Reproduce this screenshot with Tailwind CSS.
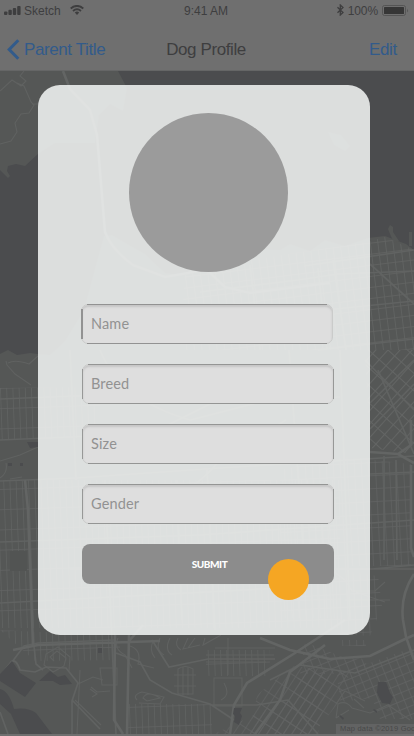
<!DOCTYPE html>
<html lang="en">
<head>
<meta charset="utf-8">
<meta name="viewport" content="width=device-width, initial-scale=1">
<title>Dog Profile</title>
<script src="https://cdn.jsdelivr.net/npm/@tailwindcss/browser@4"></script>
</head>
<body class="w-[414px] h-[736px] overflow-hidden bg-[#6f6f6f] font-['Liberation_Sans',sans-serif]">
<div class="relative flex flex-col w-[414px] h-[736px] overflow-hidden">
  <!-- Map backdrop -->
  <svg class="absolute inset-0" width="414" height="734" viewBox="0 0 414 734" fill="none">
    <defs>
      <pattern id="west" width="6.2" height="20.2" patternUnits="userSpaceOnUse" patternTransform="translate(0 388) rotate(-2)"><path d="M0 0H6.2M0 0V20.2" stroke="#626463" stroke-width="1.3"/></pattern>
      <pattern id="blocks" width="7.5" height="11" patternUnits="userSpaceOnUse" patternTransform="rotate(-7)"><path d="M0 0H8M0 0V11" stroke="#636564" stroke-width="1.5"/></pattern>
      <pattern id="diag" width="9" height="13" patternUnits="userSpaceOnUse" patternTransform="rotate(42)"><path d="M0 0H9M0 0V13" stroke="#636564" stroke-width="2"/></pattern>
      <pattern id="east" width="7" height="13" patternUnits="userSpaceOnUse" patternTransform="rotate(-3)"><path d="M0 0H7M0 0V13" stroke="#626463" stroke-width="1.3"/></pattern>
      <pattern id="south" width="7" height="14" patternUnits="userSpaceOnUse" patternTransform="rotate(33)"><path d="M0 0H7M0 0V14" stroke="#626463" stroke-width="1.4"/></pattern>
      <pattern id="se" width="8" height="8" patternUnits="userSpaceOnUse" patternTransform="rotate(-22)"><path d="M0 0H8M0 0V8" stroke="#626463" stroke-width="1.4"/></pattern>
    </defs>
    <rect width="414" height="734" fill="#555756"/>
    <path d="M118 71H414V250L406 244L398 241L385 236L368 238L345 246L325 240L310 251L290 244L280 250L250 249L215 260L180 275L165 273L145 254L129 245L112 235L104 236L96 265L84 310L65 341L50 355L38 354L30 353L17 355L8 350L0 354V170L8 178L10 176L7 171L8 166L16 164L25 166L38 154L55 143H95L99 115L110 104L123 111L127 88Z" fill="#4b4c4e"/>
    <path d="M328 132l13 3 9 11-5 5-11-6zM390 225l3 2 0 5 6 9-5 2-4-9-2-5zM409 232h3v14h-3z" fill="#555756"/>
    <!-- Street grids -->
    <path d="M0 388L100 387V437L0 440ZM0 480H340V628H0Z" fill="url(#west)"/>
    <path d="M185 275L250 260L368 242L385 237L414 250V350H180Z" fill="url(#blocks)"/>
    <path d="M365 350H414V454L370 448Z" fill="url(#diag)"/>
    <path d="M345 457L411 464V566H348V618H280V470Z" fill="url(#east)"/>
    <path d="M0 630L38 632H120V660L35 661Z" fill="url(#west)"/>
    <path d="M128 704H212V734H126ZM206 650H270V676H206Z" fill="url(#west)"/>
    <path d="M214 734L290 698L300 672L330 672L318 734Z" fill="url(#south)"/>
    <path d="M257 695L292 666L350 672L340 701L313 734H250Z" fill="url(#south)"/>
    <path d="M337 675L414 647V719H380L372 698L340 702Z" fill="url(#se)"/>
    <path d="M305 642L330 652L345 658L368 659L362 674H300Z" fill="url(#se)"/>
    <path d="M348 572l30 4 4 30-12 30-32-2zM342 640h24v6h-24z" fill="url(#east)"/>
    <!-- Minor roads -->
    <g stroke="#606261" stroke-width="1.1">
      <path d="M0 91L12 80L21 86L26 81L20 76L24 71M17 83L24 86L31 102L34 105L29 113L21 114L15 123L17 132L11 141L0 144M38 104H32"/>
      <path d="M8 363Q15 359 29 364L38 356M7 365L15 374L31 385M7 365L6 361M0 461L20 455L38 447M0 478Q8 473 6 463M10 479L22 477"/>
      <path d="M54 661L50 657L57 651L66 658L64 666L53 672L44 665L46 654L58 647L70 657L69 671"/>
      <path d="M100 668h17v17h-15zM78 684l15-7 10 3M91 687l6 5 13-1M80 670l-3 64M90 689l7 5-5 3M75 700l26 25"/>
      <path d="M137 700Q132 695 142 692L164 697L160 704L139 703M143 698Q147 690 160 698L147 701ZM130 646Q142 650 138 664L154 668M118 638Q113 649 125 655L132 668"/>
      <path d="M154 640Q148 649 155 658M160 638Q155 650 164 655M170 638Q164 650 172 655M178 638Q174 646 181 650M188 638L183 649L200 645M195 638L188 648M205 638L203 645L221 635"/>
      <path d="M178 669Q185 664 193 669V694H178ZM183 667V695M188 667V695M174 675H196M174 686H196"/>
      <path d="M214 678h28v28h-28zM221 700q10-5 3-17M228 638v37M206 655h68M206 662h60M215 648h60"/>
      <path d="M336 718L338 704Q346 700 352 708L370 713L388 705L410 720M349 710l-13 8M336 704l9-13 20 10M354 699l10 9"/>
      <path d="M330 569L345 580L352 591H375L385 582M345 600H390M356 592L370 597L385 602M322 560L332 580"/>
    </g>
    <path d="M10 551H27V571H10Z" fill="#525453"/>
    <!-- Arterials -->
    <g stroke="#616362" stroke-width="1.7">
      <path d="M0 399L100 395M0 440L140 434M0 481L76 478L220 468L414 456M0 542L200 535L414 520M0 603L280 588M70 569H414M372 569L414 565M370 474L414 472"/>
      <path d="M70 350L76 480M105 480L116 734M176 480L182 620M207 470L215 630M289 350L305 570M340 350L350 620M384 456V560M396 460L397 560"/>
      <path d="M100 350Q120 400 190 420L260 402L340 397M95 520Q180 510 220 460L286 420M134 442L238 390"/>
      <path d="M304 266L414 250M200 292L298 280L338 274L414 271M325 310L414 301M318 350L414 339M318 268L327 350M333 260L346 350M250 265L260 350"/>
      <path d="M370 264L414 304M370 403L414 360M370 429L414 384M365 360L414 410M378 370L414 454"/>
      <path d="M0 678L18 654L24 646L38 643L114 640M34 646L36 664L43 670M0 676L11 662Q16 658 20 670L35 672L46 667L66 668L78 683L72 701V734M72 700L100 729M0 712L8 734"/>
      <path d="M116 653L140 662L150 680L172 693L210 704L234 720M210 705L257 705L288 700M288 700L318 734"/>
      <path d="M152 640L169 667L208 659H275M270 680L300 665L355 673L414 650"/>
    </g>
    <g stroke="#636564" stroke-width="2.6">
      <path d="M25 480L28 510L33 645M13 650L38 645L160 641M115 635L114 720L123 734M129 635L127 734M129 641L143 625"/>
      <path d="M63 71L70 89L90 110L97 135L105 232Q112 250 133 265L165 277L188 273L206 269L225 287L250 293L330 283"/>
      <path d="M260 638L290 650L330 659L370 656L403 640L414 635M230 734L234 705L247 683L295 653L345 620M255 734L280 700L290 672L325 645"/>
      <path d="M414 574Q400 595 403 620L406 637L414 660M370 452L398 454L414 463M411 420V445L398 454M411 465V548L414 557"/>
    </g>
    <!-- Lakes and parks -->
    <path d="M12 661L20 673L36 683L25 697L0 681V674ZM39 681L50 671L58 677L65 675L72 684L60 685L53 681ZM0 689Q9 691 14 709Q28 707 36 713L52 734H20L11 714L0 704ZM27 442H38V447L30 448ZM378 682h8l4 11 3 4-3 7-8-1-5-10zM98 648h4v5h-4zM234 708h8l-2 5 2 3-3 9-5-3 1-6-2-2zM8 463h4v3H8zM20 463h3v3h-3zM340 715l4 3-1 2-4-4zM374 709l3 2v2l-4-3z" fill="#4b4c4e"/>
  </svg>

  <!-- Status and navigation bars -->
  <header class="relative flex flex-col h-[71px] bg-[#6f6f6f] border-b border-[#656666] text-[#3e3e3f]">
    <div class="grid grid-cols-3 items-center h-[22px] pl-1 pr-[5px] text-[12px] leading-[14px]">
      <div class="flex items-center">
        <svg class="-mt-[2px]" width="17" height="9" viewBox="0 0 17 10" preserveAspectRatio="none" fill="#3e3e3f"><rect y="6" width="3.4" height="4" rx="1"/><rect x="4.4" y="4.2" width="3.4" height="5.8" rx="1"/><rect x="8.8" y="2.2" width="3.4" height="7.8" rx="1"/><rect x="13.2" width="3.4" height="10" rx="1"/></svg>
        <span class="ml-[3px]">Sketch</span>
        <svg class="-mt-[2px] ml-[9px]" width="14" height="10" viewBox="0 0 14 10" fill="none" stroke="#3e3e3f" stroke-width="1.9"><path d="M.7 3.4Q7-1.6 13.3 3.4M3 5.9Q7 2.6 11 5.9"/><path d="M4.8 7.4Q7 5.8 9.2 7.4L7 9.9Z" fill="#3e3e3f" stroke="none"/></svg>
      </div>
      <span class="pr-px text-center">9:41 AM</span>
      <div class="flex items-center justify-end">
        <svg class="-mt-[2px]" width="7" height="12" viewBox="0 0 7 12" fill="none" stroke="#3e3e3f" stroke-width="1.3"><path d="M.5 3.2L6 8.5L3.3 11V1L6 3.5L.5 8.8"/></svg>
        <span class="ml-[4px] tracking-[-0.1px]">100%</span>
        <svg class="-mt-[2px] ml-[4px]" width="27" height="11" viewBox="0 0 27 11"><rect x=".5" y=".5" width="23" height="10" rx="2" fill="none" stroke="#555"/><rect x="2" y="2" width="20" height="7" rx=".6" fill="#363636"/><path d="M25 3.5Q26.8 5.5 25 7.5Z" fill="#555"/></svg>
      </div>
    </div>
    <div class="grid grid-cols-[1fr_auto_1fr] items-center h-[48px] pl-[7px] pr-[9px] pt-[7px] text-[17px] leading-5">
      <div class="flex items-center text-[#325b8b] tracking-[-0.4px]">
        <svg width="13" height="21" viewBox="0 0 13 21" fill="none" stroke="#325b8b" stroke-width="3"><path d="M11.3 1.2L2.2 10.5L11.3 19.8"/></svg>
        <span class="ml-1 whitespace-nowrap">Parent Title</span>
      </div>
      <span class="tracking-[-0.4px]">Dog Profile</span>
      <span class="pr-2 text-right text-[#325b8b] tracking-[-0.3px]">Edit</span>
    </div>
  </header>

  <!-- Profile form -->
  <main class="relative mt-[14px] ml-[38px] flex flex-col w-[332px] h-[550px] rounded-[22px] bg-[#f6f8f7]/85 pl-11 pr-9 pt-7">
    <div class="ml-[47px] size-[159px] rounded-full bg-[#9b9b9b]"></div>
    <!-- Each field's dark rules stop short of its pale rounded corners -->
    <form class="mt-8 flex flex-col gap-5 font-[Lato,sans-serif] text-[14.5px] tracking-[0.15px] text-[#929292]">
      <label class="relative -ml-px flex h-10 w-[252px] items-center rounded-[7px] border border-[#cacbca] bg-[#dedede] pb-px pl-[9px] shadow-[inset_0_2px_2px_#c6c6c6] before:absolute before:inset-x-[5px] before:-inset-y-px before:border-y before:border-[#929292] after:absolute after:inset-y-[4px] after:-left-px after:w-[2px] after:bg-[#929292]">Name</label>
      <label class="relative flex h-10 w-[252px] items-center rounded-[7px] border border-[#cacbca] bg-[#dedede] pb-px pl-2 shadow-[inset_0_2px_2px_#c6c6c6] before:absolute before:inset-x-[5px] before:-inset-y-px before:border-y before:border-[#949594] after:absolute after:inset-y-[4px] after:-inset-x-px after:border-x after:border-[#979897]">Breed</label>
      <label class="relative flex h-10 w-[252px] items-center rounded-[7px] border border-[#cacbca] bg-[#dedede] pb-px pl-2 shadow-[inset_0_2px_2px_#c6c6c6] before:absolute before:inset-x-[5px] before:-inset-y-px before:border-y before:border-[#949594] after:absolute after:inset-y-[4px] after:-inset-x-px after:border-x after:border-[#979897]">Size</label>
      <label class="relative flex h-10 w-[252px] items-center rounded-[7px] border border-[#cacbca] bg-[#dedede] pb-px pl-2 shadow-[inset_0_2px_2px_#c6c6c6] before:absolute before:inset-x-[5px] before:-inset-y-px before:border-y before:border-[#949594] after:absolute after:inset-y-[4px] after:-inset-x-px after:border-x after:border-[#979897]">Gender</label>
      <button type="button" class="h-10 w-[252px] rounded-[8px] bg-[#8c8c8c] pl-[3px] text-[10px] font-black tracking-[-0.45px] text-white">SUBMIT</button>
    </form>
    <div class="absolute left-[230px] top-[474px] size-[41px] rounded-full bg-[#f5a623]"></div>
  </main>

  <div class="absolute bottom-[2px] right-0 h-[10px] w-[78px] overflow-hidden whitespace-nowrap bg-[#626363] pl-[4px] text-[7.5px] leading-[10px] tracking-[0.2px] text-[#484949]">Map data ©2019 Goo</div>
</div>
</body>
</html>
